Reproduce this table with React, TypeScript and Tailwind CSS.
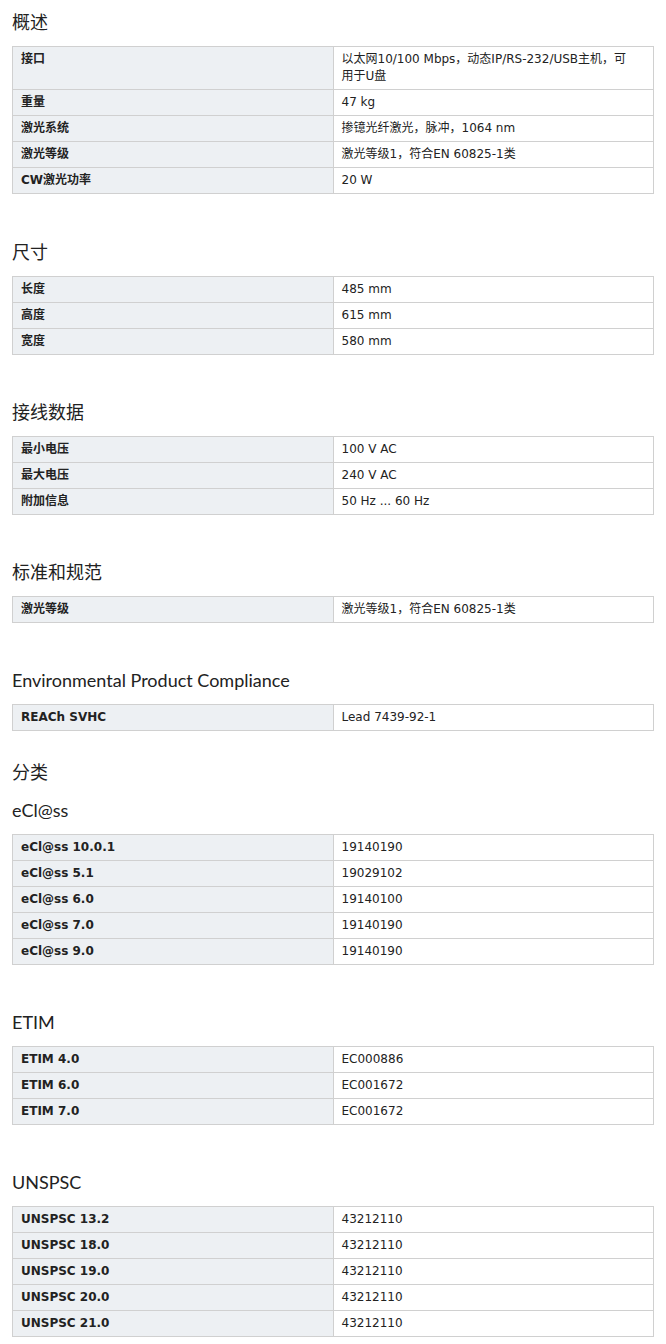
type Row = [string, React.ReactNode];

type Section = {
  title: string;
  rows?: Row[];
  gapAfter: string;
};

const sections: Section[] = [
  {
    title: "概述",
    rows: [
      [
        "接口",
        <>
          以太网10/100 Mbps，动态IP/RS-232/USB主机，可
          <br />
          用于U盘
        </>,
      ],
      ["重量", "47 kg"],
      ["激光系统", "掺镱光纤激光，脉冲，1064 nm"],
      ["激光等级", "激光等级1，符合EN 60825-1类"],
      ["CW激光功率", "20 W"],
    ],
    gapAfter: "mb-[46px]",
  },
  {
    title: "尺寸",
    rows: [
      ["长度", "485 mm"],
      ["高度", "615 mm"],
      ["宽度", "580 mm"],
    ],
    gapAfter: "mb-[45px]",
  },
  {
    title: "接线数据",
    rows: [
      ["最小电压", "100 V AC"],
      ["最大电压", "240 V AC"],
      ["附加信息", "50 Hz ... 60 Hz"],
    ],
    gapAfter: "mb-[45px]",
  },
  {
    title: "标准和规范",
    rows: [["激光等级", "激光等级1，符合EN 60825-1类"]],
    gapAfter: "mb-[45px]",
  },
  {
    title: "Environmental Product Compliance",
    rows: [["REACh SVHC", "Lead 7439-92-1"]],
    gapAfter: "mb-[29px]",
  },
  {
    title: "分类",
    gapAfter: "mb-[14px]",
  },
  {
    title: "eCl@ss",
    rows: [
      ["eCl@ss 10.0.1", "19140190"],
      ["eCl@ss 5.1", "19029102"],
      ["eCl@ss 6.0", "19140100"],
      ["eCl@ss 7.0", "19140190"],
      ["eCl@ss 9.0", "19140190"],
    ],
    gapAfter: "mb-[45px]",
  },
  {
    title: "ETIM",
    rows: [
      ["ETIM 4.0", "EC000886"],
      ["ETIM 6.0", "EC001672"],
      ["ETIM 7.0", "EC001672"],
    ],
    gapAfter: "mb-[45px]",
  },
  {
    title: "UNSPSC",
    rows: [
      ["UNSPSC 13.2", "43212110"],
      ["UNSPSC 18.0", "43212110"],
      ["UNSPSC 19.0", "43212110"],
      ["UNSPSC 20.0", "43212110"],
      ["UNSPSC 21.0", "43212110"],
    ],
    gapAfter: "mb-[8px]",
  },
];

function SpecTable({ rows }: { rows: Row[] }) {
  return (
    <table className="w-full table-fixed border-collapse text-[12px] leading-[17px] text-[#222]">
      <tbody>
        {rows.map(([label, value], i) => (
          <tr key={i}>
            <td className="w-1/2 border border-[#d0d0d0] bg-[#edf0f3] px-2 py-1 align-top font-bold">
              {label}
            </td>
            <td className="w-1/2 border border-[#d0d0d0] bg-white px-2 py-1 align-top">
              {value}
            </td>
          </tr>
        ))}
      </tbody>
    </table>
  );
}

export default function App() {
  return (
    <div
      className="min-h-[1344px] bg-white px-3 pt-[10px] text-[#222]"
      style={{ fontFamily: 'Verdana, "DejaVu Sans", "Noto Sans CJK SC", sans-serif' }}
    >
      {sections.map((s) => (
        <section key={s.title} className={s.gapAfter}>
          <h2
            className="mb-3 h-6 text-[18px] font-normal leading-6 text-[#222]"
            style={{ fontFamily: 'Lato, "Noto Sans CJK SC", sans-serif' }}
          >
            {s.title}
          </h2>
          {s.rows ? <SpecTable rows={s.rows} /> : null}
        </section>
      ))}
    </div>
  );
}
